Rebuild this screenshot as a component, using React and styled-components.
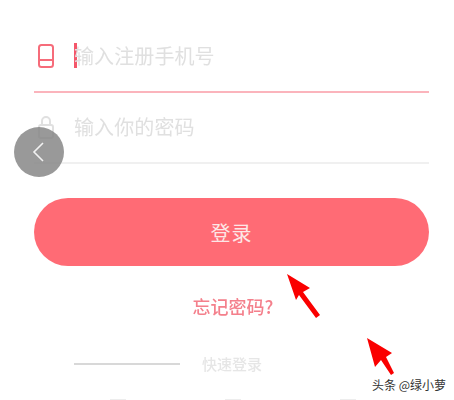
import styled, { createGlobalStyle } from "styled-components";

const GlobalStyle = createGlobalStyle`
    html, body {
        margin: 0;
        background: #ffffff;
    }
    body {
        font-family: "Noto Sans CJK SC", "Liberation Sans", sans-serif;
    }
`

const Page = styled.div`
    position: relative;
    width: 454px;
    height: 400px;
    overflow: hidden;
    background: #ffffff;
    padding: 22px 25px 0 34px;
    box-sizing: border-box;
`

const Field = styled.div`
    display: flex;
    align-items: center;
    height: 71px;
    padding: 0 0 2px 4px;
    box-sizing: border-box;
    border-bottom: ${(props) => (props.$active ? "2px solid #fbb4bc" : "2px solid #f0f0f0")};
`

const FieldIcon = styled.svg`
    width: 16px;
    height: 24px;
    flex-shrink: 0;
    filter: blur(0.3px);
`

const Caret = styled.span`
    width: 3px;
    height: 25px;
    margin-left: 20px;
    margin-right: -3px;
    background: #f4566a;
    flex-shrink: 0;
`

const Placeholder = styled.span`
    margin-left: ${(props) => (props.$active ? "0" : "20px")};
    font-size: 20px;
    line-height: 28px;
    letter-spacing: 0.1px;
    color: #e0e0e0;
    filter: blur(0.6px);
`

const LoginButton = styled.button`
    display: block;
    width: 100%;
    height: 68px;
    margin-top: 34px;
    border: none;
    border-radius: 34px;
    background: #ff6b75;
    color: #fde6e6;
    font-family: inherit;
    font-size: 20px;
    letter-spacing: 1px;
`

const Forgot = styled.a`
    display: block;
    margin-top: 29px;
    padding-left: 3px;
    text-align: center;
    font-size: 18px;
    line-height: 22px;
    font-weight: 500;
    color: #f4808c;
    filter: blur(0.5px);
`

const QuickRow = styled.div`
    display: flex;
    align-items: center;
    margin-top: 37px;
    margin-left: 40px;
`

const QuickLine = styled.span`
    width: 106px;
    height: 2px;
    background: #d8d8d8;
`

const QuickText = styled.span`
    margin-left: 22px;
    font-size: 15px;
    line-height: 20px;
    font-weight: 500;
    color: #e6e6e6;
    filter: blur(0.6px);
`

const SocialRow = styled.div`
    display: flex;
    margin-top: 25px;
    margin-left: 76px;
    gap: 99px;
`

const SocialStub = styled.span`
    width: 16px;
    height: 3px;
    background: #ededed;
`

const BackButton = styled.div`
    position: absolute;
    left: 14px;
    top: 127px;
    width: 50px;
    height: 50px;
    border-radius: 50%;
    background: rgba(130, 130, 130, 0.82);
    display: flex;
    align-items: center;
    justify-content: center;
`

const Chevron = styled.svg`
    margin-right: 3px;
`

const Arrow = styled.svg`
    position: absolute;
    left: ${(props) => props.$left}px;
    top: ${(props) => props.$top}px;
`

const Watermark = styled.span`
    position: absolute;
    left: 372px;
    top: 376px;
    font-size: 12px;
    line-height: 18px;
    color: #333333;
    white-space: nowrap;
`

const App = () => {
    return (
        <Page>
            <GlobalStyle />
            <Field $active>
                <FieldIcon viewBox="0 0 16 24" fill="none" stroke="#f66c7a" strokeWidth="2">
                    <rect x="1" y="1" width="14" height="22" rx="2.5" />
                    <line x1="1" y1="16" x2="15" y2="16" />
                </FieldIcon>
                <Caret />
                <Placeholder $active>输入注册手机号</Placeholder>
            </Field>
            <Field>
                <FieldIcon viewBox="0 0 16 24" fill="none" stroke="#e0e0e0" strokeWidth="2">
                    <rect x="1" y="10" width="14" height="13" rx="2" />
                    <path d="M4 10V6a4 4 0 0 1 8 0v4" />
                </FieldIcon>
                <Placeholder>输入你的密码</Placeholder>
            </Field>
            <LoginButton>登录</LoginButton>
            <Forgot>忘记密码?</Forgot>
            <QuickRow>
                <QuickLine />
                <QuickText>快速登录</QuickText>
            </QuickRow>
            <SocialRow>
                <SocialStub />
                <SocialStub />
                <SocialStub />
            </SocialRow>
            <BackButton>
                <Chevron width="14" height="22" viewBox="0 0 14 22" fill="none" stroke="#f2f2f2" strokeWidth="1.6">
                    <path d="M12 2 L3 11 L12 20" />
                </Chevron>
            </BackButton>
            <Arrow $left={280} $top={270} width="44" height="50" viewBox="0 0 44 50">
                <path d="M7 4 L30 18 L23 22 L40 45 L36 48 L19 25 L16 30 Z" fill="#fa0000" />
            </Arrow>
            <Arrow $left={365} $top={336} width="32" height="42" viewBox="0 0 32 42">
                <path d="M2 2 L27 17 L21 21 L29 37 L26 39 L16 24 L10 31 Z" fill="#fa0000" />
            </Arrow>
            <Watermark>头条 @绿小萝</Watermark>
        </Page>
    )
}

export default App;
